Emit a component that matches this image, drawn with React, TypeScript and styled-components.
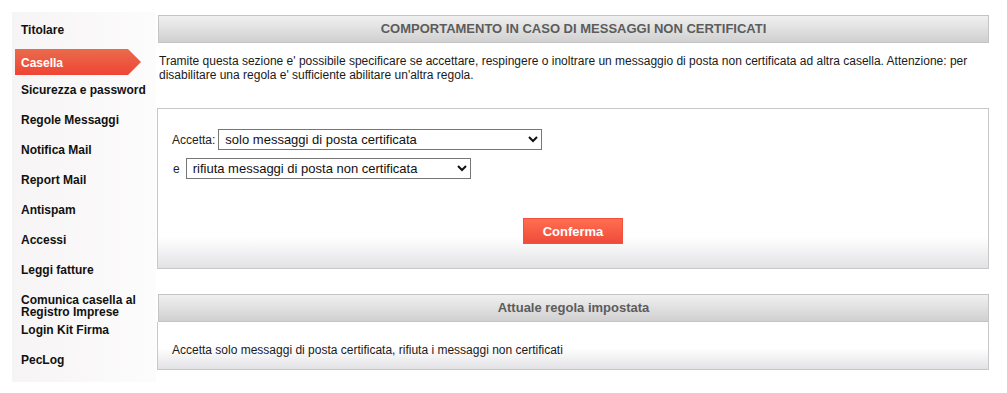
import { FC } from "react";
import styled, { createGlobalStyle } from "styled-components";

const menuItems = [
  "Titolare",
  "Casella",
  "Sicurezza e password",
  "Regole Messaggi",
  "Notifica Mail",
  "Report Mail",
  "Antispam",
  "Accessi",
  "Leggi fatture",
  "Comunica casella al Registro Imprese",
  "Login Kit Firma",
  "PecLog",
];

const App: FC = () => {
  return (
    <>
      <GlobalStyle />
      <Page>
        <Sidebar>
          {menuItems.map((item) => (
            <MenuItem key={item} $active={item === "Casella"}>
              {item}
            </MenuItem>
          ))}
        </Sidebar>
        <Main>
          <Header>COMPORTAMENTO IN CASO DI MESSAGGI NON CERTIFICATI</Header>
          <Description>
            Tramite questa sezione e' possibile specificare se accettare, respingere o inoltrare un
            messaggio di posta non certificata ad altra casella. Attenzione: per disabilitare una
            regola e' sufficiente abilitare un'altra regola.
          </Description>
          <FormBox>
            <FormRow>
              <Label>Accetta:</Label>
              <Select $width={324} defaultValue="cert">
                <option value="cert">solo messaggi di posta certificata</option>
                <option value="all">tutti i messaggi</option>
              </Select>
            </FormRow>
            <FormRow>
              <Label $gap={6}>e</Label>
              <Select $width={285} defaultValue="rifiuta">
                <option value="rifiuta">rifiuta messaggi di posta non certificata</option>
                <option value="inoltra">inoltra messaggi di posta non certificata</option>
              </Select>
            </FormRow>
            <ButtonRow>
              <Button>Conferma</Button>
            </ButtonRow>
          </FormBox>
          <Header $spaced>Attuale regola impostata</Header>
          <RuleBox>
            Accetta solo messaggi di posta certificata, rifiuta i messaggi non certificati
          </RuleBox>
        </Main>
      </Page>
    </>
  );
};

export default App;

const GlobalStyle = createGlobalStyle`
  body {
    margin: 0;
    background: #fff;
    font-family: "Liberation Sans", Arial, sans-serif;
  }
`;

const Page = styled.div`
  display: flex;
  align-items: flex-start;
  gap: 1px;
  padding: 12px 0 0 12px;
`;

const Sidebar = styled.nav`
  width: 144px;
  padding: 3px 0 7px;
  background: linear-gradient(to right, #f6f4f4, #fdfcfc);
`;

const MenuItem = styled.div<{ $active?: boolean }>`
  box-sizing: border-box;
  height: ${(p) => (p.$active ? "26px" : "30px")};
  margin: ${(p) => (p.$active ? "4px 0 0 3px" : "0")};
  width: ${(p) => (p.$active ? "126px" : "auto")};
  padding: ${(p) => (p.$active ? "8px 0 0 6px" : "9px 0 0 9px")};
  font-size: 12px;
  line-height: 12px;
  font-weight: bold;
  color: ${(p) => (p.$active ? "#fff" : "#111")};
  background: ${(p) =>
    p.$active ? "linear-gradient(to bottom, #e96c4c, #ef4435)" : "transparent"};
  clip-path: ${(p) =>
    p.$active ? "polygon(0 0, 113px 0, 100% 50%, 113px 100%, 0 100%)" : "none"};
`;

const Main = styled.main`
  width: 832px;
  margin-top: 3px;
`;

const Header = styled.div<{ $spaced?: boolean }>`
  box-sizing: border-box;
  height: 28px;
  margin: ${(p) => (p.$spaced ? "25px 0 0 1px" : "0 0 0 1px")};
  border: 1px solid #c4c4c4;
  background: linear-gradient(to bottom, #f0f0f0, #d0d0d0);
  color: #5c5c5c;
  font-size: 13px;
  font-weight: bold;
  line-height: 26px;
  text-align: center;
`;

const Description = styled.p`
  margin: 11px 0 0 2px;
  font-size: 12px;
  line-height: 14px;
  color: #1a1a1a;
`;

const FormBox = styled.div`
  box-sizing: border-box;
  height: 161px;
  margin-top: 26px;
  padding: 20px 14px 0;
  border: 1px solid #c8c8c8;
  background: linear-gradient(to bottom, #fff 0, #fff 128px, #e2e2e6 100%);
`;

const FormRow = styled.div`
  display: flex;
  align-items: center;
  margin-bottom: 8px;
`;

const Label = styled.span<{ $gap?: number }>`
  margin-left: ${(p) => (p.$gap ? "1px" : "0")};
  margin-right: ${(p) => p.$gap ?? 3}px;
  font-size: 12px;
  color: #222;
`;

const Select = styled.select<{ $width: number }>`
  box-sizing: border-box;
  width: ${(p) => p.$width}px;
  height: 21px;
  padding: 0 2px;
  border: 1px solid #767676;
  border-radius: 0;
  background: #fff;
  color: #111;
  font-family: "Liberation Sans", Arial, sans-serif;
  font-size: 13px;
`;

const ButtonRow = styled.div`
  display: flex;
  justify-content: center;
  margin-top: 39px;
`;

const Button = styled.button`
  width: 100px;
  height: 26px;
  border: 1px solid #f5503e;
  background: linear-gradient(to bottom, #ff6f50, #f04a3a);
  color: #fff;
  font-family: "Liberation Sans", Arial, sans-serif;
  font-size: 13px;
  font-weight: bold;
  cursor: pointer;
`;

const RuleBox = styled.div`
  box-sizing: border-box;
  height: 48px;
  padding: 21px 14px 0;
  border: 1px solid #c8c8c8;
  border-top: none;
  background: linear-gradient(to bottom, #fff 0, #fff 26px, #e2e2e6 100%);
  font-size: 12px;
  color: #1a1a1a;
`;
